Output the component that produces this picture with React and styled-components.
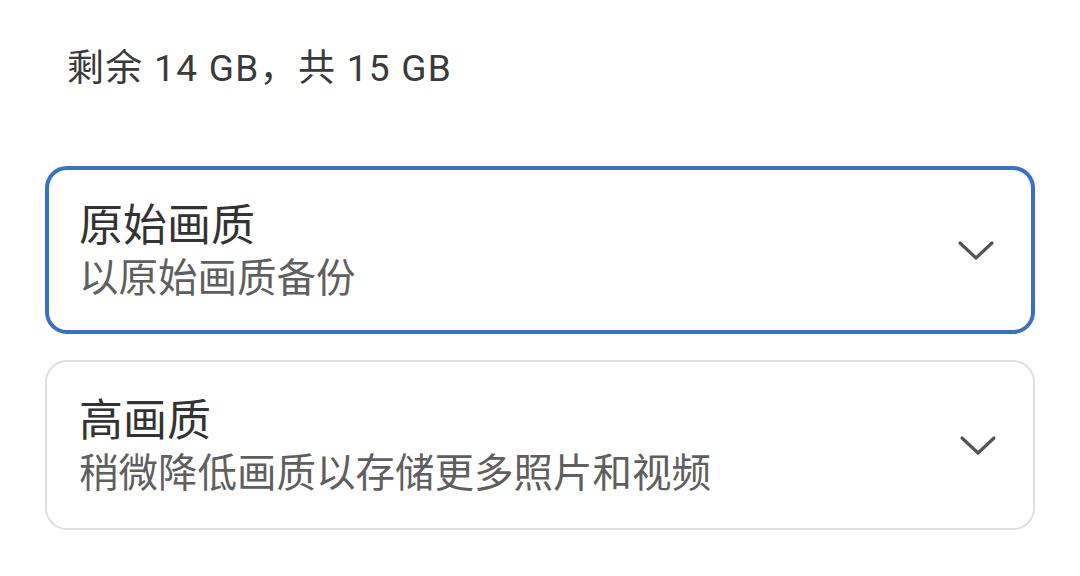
import React from 'react';
import styled, { createGlobalStyle } from 'styled-components';

const GlobalStyle = createGlobalStyle`
  body {
    margin: 0;
    background: #fff;
    font-family: Roboto, "Noto Sans CJK SC", sans-serif;
  }
`;

const Page = styled.div`
  width: 1080px;
  height: 576px;
  padding: 47px 45px 0 45px;
  box-sizing: border-box;
  display: flex;
  flex-direction: column;
`;

const Storage = styled.div`
  font-size: 37px;
  letter-spacing: 1.3px;
  line-height: 44px;
  color: #3a3a3a;
  padding-left: 22px;
  margin-bottom: 75px;
`;

const List = styled.div`
  display: flex;
  flex-direction: column;
  gap: 26px;
`;

const Card = styled.div`
  display: flex;
  align-items: center;
  justify-content: space-between;
  height: ${(p) => (p.$active ? 168 : 170)}px;
  box-sizing: border-box;
  border: ${(p) => (p.$active ? '4px solid #3872c5' : '2px solid #dedede')};
  border-radius: 22px;
  padding: 0 36px 0 ${(p) => (p.$active ? 30 : 32)}px;
  background: #fff;
`;

const Texts = styled.div`
  display: flex;
  flex-direction: column;
  padding-top: 2px;
`;

const Title = styled.div`
  font-size: 44px;
  line-height: 56px;
  color: #333;
`;

const Subtitle = styled.div`
  font-size: 39.5px;
  line-height: 50px;
  color: #5f5f5f;
`;

const Chevron = () => (
  <svg width="38" height="24" viewBox="0 0 38 24" fill="none">
    <polyline points="3,5 19,20 35,5" stroke="#555" strokeWidth="3.2" strokeLinecap="round" strokeLinejoin="round" />
  </svg>
);

const options = [
  { title: '原始画质', sub: '以原始画质备份', active: true },
  { title: '高画质', sub: '稍微降低画质以存储更多照片和视频', active: false },
];

export default function App() {
  return (
    <>
      <GlobalStyle />
      <Page>
        <Storage>剩余 14 GB，共 15 GB</Storage>
        <List>
          {options.map((o) => (
            <Card key={o.title} $active={o.active}>
              <Texts>
                <Title>{o.title}</Title>
                <Subtitle>{o.sub}</Subtitle>
              </Texts>
              <Chevron />
            </Card>
          ))}
        </List>
      </Page>
    </>
  );
}
